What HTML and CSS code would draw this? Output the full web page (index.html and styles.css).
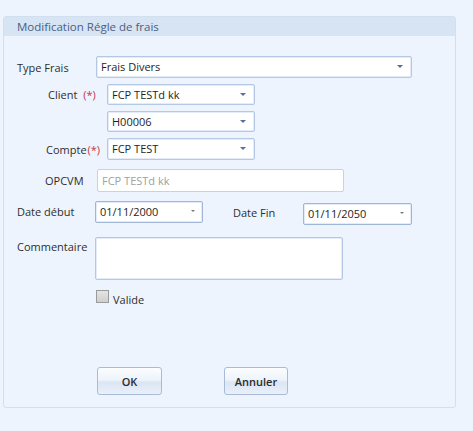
FILE: index.html
```html
<!DOCTYPE html>
<html lang="fr">
<head>
    <meta charset="UTF-8">
    <title>Modification Régle de frais</title>
    <link rel="stylesheet" href="styles.css">
</head>
<body>

    <div class="panel">
        <div class="panel-header">Modification Régle de frais</div>

        <div class="panel-body">
            <div class="row row-type">
                <span class="label label-type">Type Frais</span>
                <div class="field combo combo-wide">Frais Divers<span class="arrow"></span></div>
            </div>

            <div class="row row-client">
                <span class="label label-client">Client <span class="req req-client">(*)</span></span>
                <div class="field combo combo-small">FCP TESTd kk<span class="arrow"></span></div>
            </div>

            <div class="row row-code">
                <div class="field combo combo-small">H00006<span class="arrow"></span></div>
            </div>

            <div class="row row-compte">
                <span class="label label-compte">Compte<span class="req req-compte">(*)</span></span>
                <div class="field combo combo-small">FCP TEST<span class="arrow"></span></div>
            </div>

            <div class="row row-opcvm">
                <span class="label label-opcvm">OPCVM</span>
                <div class="field field-disabled">FCP TESTd kk</div>
            </div>

            <div class="row row-dates">
                <span class="label label-type">Date début</span>
                <div class="field date date-start">01/11/2000<span class="arrow arrow-date"></span></div>
                <span class="label label-fin">Date Fin</span>
                <div class="field date date-end">01/11/2050<span class="arrow arrow-date"></span></div>
            </div>

            <div class="row row-comment">
                <span class="label label-type label-top">Commentaire</span>
                <div class="field memo"></div>
            </div>

            <div class="row row-check">
                <span class="checkbox"></span>
                <span class="check-text">Valide</span>
            </div>

            <div class="row row-buttons">
                <button class="btn btn-ok">OK</button>
                <button class="btn btn-cancel">Annuler</button>
            </div>
        </div>
    </div>

</body>
</html>
```

FILE: styles.css
```css
/* Page */
body {
    margin: 0;
    background-color: #edf4fd;
    font-family: "Open Sans", "Noto Sans", sans-serif;
    font-size: 11px;
    color: #2e2e2e;
}

/* Group panel */
.panel {
    margin: 16px 17px 0 3px;
    height: 392px;
    box-sizing: border-box;
    border: 1px solid #d2dfee;
    border-radius: 3px;
    background-color: #edf4fd;
}

.panel-header {
    height: 19px;
    line-height: 19px;
    padding-left: 13px;
    background-color: #d6e4f4;
    color: #4a5f80;
    font-size: 11.5px;
}

.panel-body {
    padding: 20px 0 0 13px;
    display: flex;
    flex-direction: column;
}

/* Rows */
.row {
    display: flex;
    align-items: center;
}

.row-client, .row-code, .row-compte { margin-top: 6px; }
.row-opcvm { margin-top: 9px; }
.row-dates { margin-top: 9px; align-items: flex-start; }
.row-comment { margin-top: 12px; align-items: flex-start; }
.row-check { margin-top: 10px; padding-left: 79px; align-items: flex-start; }
.row-buttons { margin-top: 60px; padding-left: 80px; }
.row-code { padding-left: 90px; }

/* Labels */
.label {
    flex-shrink: 0;
    box-sizing: border-box;
    white-space: nowrap;
}

.row-dates .label { line-height: 22px; }

.label-type { width: 79px; }
.label-client { width: 90px; padding-left: 31px; }
.label-compte { width: 90px; padding-left: 29px; }
.label-opcvm { width: 80px; padding-left: 28px; }
.label-fin { width: 70px; margin-left: 30px; margin-top: 1px; }
.label-top { padding-top: 2px; }

.req { color: #c0393b; }
.req-client { margin-left: 3px; }
.req-compte { margin-left: 1px; }

/* Inputs */
.field {
    position: relative;
    box-sizing: border-box;
    height: 22px;
    line-height: 20px;
    padding-left: 4px;
    background-color: #fff;
    border: 1px solid #b3c8e4;
    border-radius: 2px;
    box-shadow: inset 0 0 0 1px #e3ecf8;
    color: #1e1e1e;
    white-space: nowrap;
}

.combo-wide { width: 316px; }
.combo-small { width: 148px; height: 21px; line-height: 19px; }
.row-compte .combo-small { height: 22px; line-height: 20px; }

.field-disabled {
    width: 247px;
    height: 23px;
    line-height: 21px;
    color: #a0a0a0;
    border-color: #c3d3e9;
    box-shadow: none;
}

.date { border-color: #9fb6d8; }
.date-start { width: 108px; margin-left: -1px; }
.date-end { width: 109px; margin-top: 2px; }

.memo {
    width: 248px;
    height: 43px;
    margin-left: -1px;
}

/* Dropdown arrows */
.arrow {
    position: absolute;
    right: 8px;
    top: 8px;
    width: 0;
    height: 0;
    border-left: 3px solid transparent;
    border-right: 3px solid transparent;
    border-top: 3px solid #55709c;
}

.arrow-date {
    right: 7px;
    border-left-width: 2px;
    border-right-width: 2px;
    border-top: 2px solid #777;
}

/* Checkbox */
.checkbox {
    width: 11px;
    height: 11px;
    border: 1px solid #9a9a9a;
    background: linear-gradient(#e4e4e4, #cfcfcf);
}

.check-text {
    margin-left: 4px;
    margin-top: 3px;
    line-height: 14px;
}

/* Buttons */
.btn {
    box-sizing: border-box;
    height: 28px;
    border: 1px solid #a8bcd9;
    border-radius: 3px;
    background: linear-gradient(#fbfdff 0%, #eef4fb 45%, #dbe6f3 55%, #e9f0f9 100%);
    font-family: "Open Sans", "Noto Sans", sans-serif;
    font-size: 11px;
    font-weight: 600;
    color: #2b2b2b;
    padding: 0;
}

.btn-ok { width: 65px; }
.btn-cancel { width: 64px; margin-left: 62px; }
```
